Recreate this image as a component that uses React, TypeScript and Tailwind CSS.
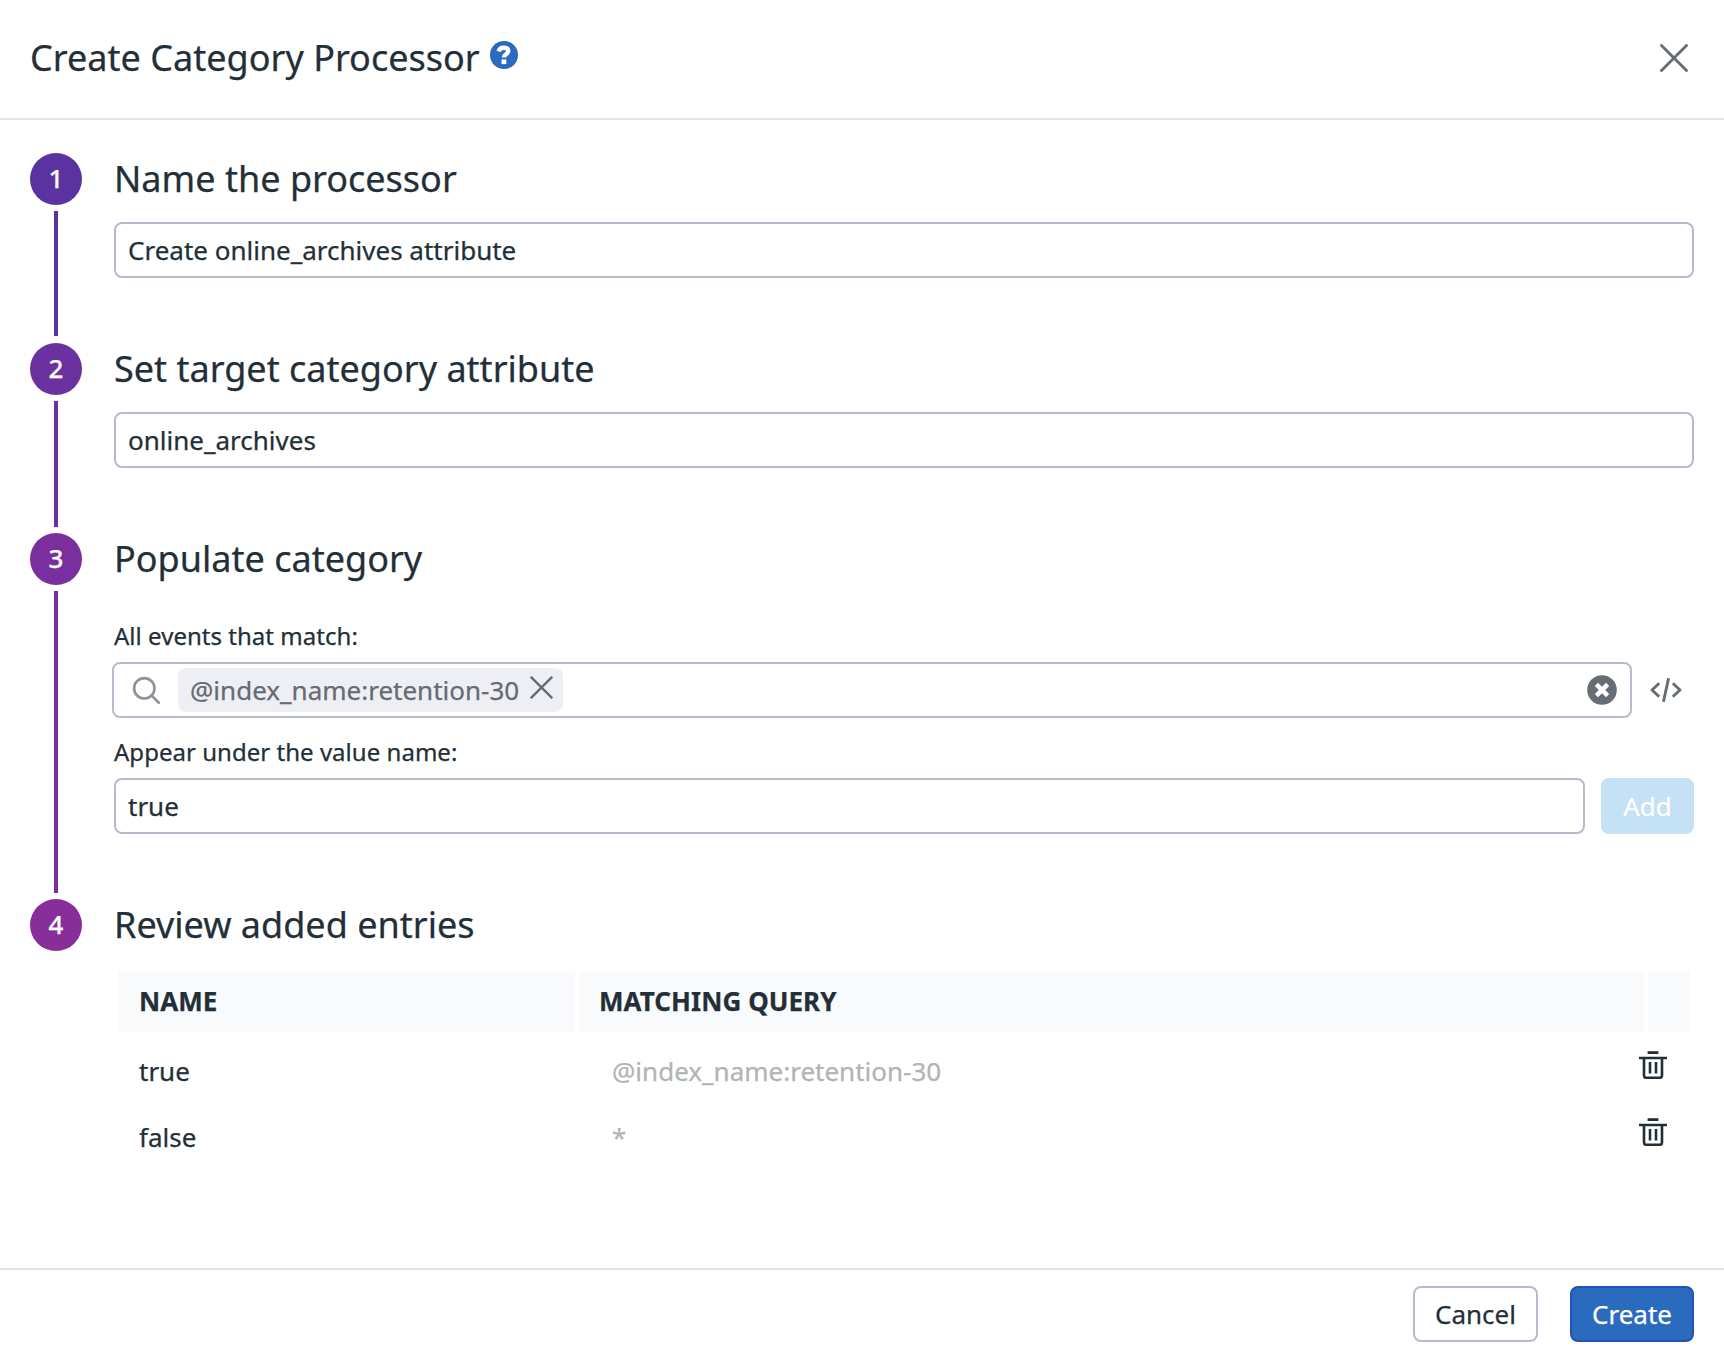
import type { ReactNode } from "react";

function StepBadge({ n, color }: { n: number; color: string }) {
  return (
    <div className={`flex size-[52px] shrink-0 items-center justify-center rounded-full text-[26px] font-medium leading-[51px] text-white ${color}`}>
      <span className="-mt-px">{n}</span>
    </div>
  );
}

type StepProps = { n: number; title: string; color: string; height: string; lineGap?: string; last?: boolean; children: ReactNode };

function Step({ n, title, color, height, lineGap = "mb-1.5", last, children }: StepProps) {
  return (
    <section className={`flex gap-8 ${height}`}>
      <div className="flex w-[52px] shrink-0 flex-col items-center">
        <StepBadge n={n} color={color} />
        {!last && <div className={`mt-1.5 w-1 flex-1 ${lineGap} ${color}`} />}
      </div>
      <div className="min-w-0 flex-1">
        <h2 className="h-[52px] text-[36px] leading-[51px] tracking-[0.01px]">{title}</h2>
        {children}
      </div>
    </section>
  );
}

function TextField({ value, className }: { value: string; className: string }) {
  return (
    <div className={`flex h-14 items-center rounded-lg border-2 border-[#b7bacc] bg-white px-3 text-[26px] leading-[36px] ${className}`}>
      {value}
    </div>
  );
}

function TrashIcon() {
  return (
    <svg className="h-7 w-7" viewBox="0 0 28 28" fill="none" stroke="#232f38">
      <path d="M8.6 1.6h10.8" strokeWidth="2.8" />
      <path d="M0 7h28M5 7v17.6q0 2.2 2.2 2.2h13.6q2.2 0 2.2-2.2V7" strokeWidth="2.6" />
      <path d="M11 11v11.4M17 11v11.4" strokeWidth="2.6" />
    </svg>
  );
}

const entries = [
  { name: "true", query: "@index_name:retention-30", iconGap: "mb-[13px]" },
  { name: "false", query: "*", iconGap: "mb-[11px]" },
];

export default function App() {
  return (
    <div className="flex h-[1364px] w-[1724px] flex-col bg-white font-['Noto_Sans',sans-serif] text-[#232f38] [-webkit-text-stroke:0.25px]">
      <header className="flex h-[120px] shrink-0 items-start justify-between border-b-2 border-[#e1e4eb] pl-[30px] pr-9">
        <div className="flex pt-[33px]">
          <h1 className="whitespace-nowrap text-[36px] leading-[50px] tracking-[0.02px]">Create Category Processor</h1>
          <svg className="ml-[10px] mt-2 size-7" viewBox="0 0 28 28">
            <circle cx="14" cy="14" r="14" fill="#2a6bbd" />
            <path d="M8.6 10.4C9.3 8 11 6.8 13.8 6.8c2.8 0 4.5 1.3 4.5 3.3 0 3.1-4.3 2.7-4.3 6.5" fill="none" stroke="#fff" strokeWidth="4.4" />
            <path d="M11.5 18.4h4.8v4.7h-4.8z" fill="#fff" />
          </svg>
        </div>
        <svg className="mt-11 size-7" viewBox="0 0 28 28" fill="none" stroke="#666d74" strokeWidth="2.9" strokeLinecap="round">
          <path d="M1.5 1.5l25 25M26.5 1.5l-25 25" />
        </svg>
      </header>

      <main className="flex-1 pl-[30px] pr-[30px] pt-[33px]">
        <Step n={1} title="Name the processor" color="bg-[#5b33a0]" height="h-[190px]" lineGap="mb-[7px]">
          <TextField value="Create online_archives attribute" className="mt-[17px]" />
        </Step>
        <Step n={2} title="Set target category attribute" color="bg-[#6b319f]" height="h-[190px]">
          <TextField value="online_archives" className="mt-[17px]" />
        </Step>
        <Step n={3} title="Populate category" color="bg-[#792f9d]" height="h-[366px]">
          <p className="mt-[35px] h-[42px] text-[24px] leading-[32px] tracking-[0.03px]">All events that match:</p>
          <div className="-ml-0.5 flex items-center">
            <div className="flex h-14 w-[1520px] items-center rounded-lg border-2 border-[#b7bacc] pl-[18px] pr-[13px]">
              <svg className="size-7" viewBox="0 0 28 28" fill="none" stroke="#8e9499" strokeWidth="2.7">
                <circle cx="12.3" cy="12.3" r="10.2" />
                <path d="M19.4 19.4l8.2 8.2" />
              </svg>
              <div className="ml-[18px] flex h-11 w-[385px] items-center justify-between rounded-lg bg-[#eeeff5] pl-3 pr-[10px] text-[26px] text-[#646c71]">
                <span>@index_name:retention-30</span>
                <svg className="mb-[5px] h-[23px] w-[23px]" viewBox="0 0 23 23" fill="none" stroke="#646c71" strokeWidth="2.4">
                  <path d="M.8.8l21.4 21.4M22.2.8L.8 22.2" />
                </svg>
              </div>
              <svg className="ml-auto size-[30px]" viewBox="0 0 30 30">
                <circle cx="15" cy="15" r="14.8" fill="#666d74" />
                <path d="M9.4 9.4l11.2 11.2M20.6 9.4L9.4 20.6" stroke="#fff" strokeWidth="4.5" />
              </svg>
            </div>
            <svg className="ml-[18px] h-6 w-8" viewBox="0 0 32 24" fill="none" stroke="#666d74" strokeWidth="2.9" strokeLinejoin="round">
              <path d="M9.2 5.2L2 12l7.2 6.8M22.8 5.2L30 12l-7.2 6.8M18.6.2l-5.2 23.6" />
            </svg>
          </div>
          <p className="mt-[18px] h-[42px] text-[24px] leading-[32px] tracking-[0.03px]">Appear under the value name:</p>
          <div className="flex gap-4">
            <TextField value="true" className="w-[1471px]" />
            <button className="h-14 flex-1 rounded-lg bg-[#c4e1f5] text-[26px] leading-none text-white">Add</button>
          </div>
        </Step>
        <Step n={4} title="Review added entries" color="bg-[#872e9b]" height="h-[250px]" last>
          <div className="ml-1 mt-[21px] grid w-[1572px] grid-cols-[457px_1065px_42px] gap-x-1 text-[26px]">
            <div className="flex h-[60px] items-center bg-[#f9fafc] pb-0.5 pl-[21px] font-bold">NAME</div>
            <div className="flex h-[60px] items-center bg-[#f9fafc] pb-0.5 pl-[20px] font-bold tracking-[0.06px]">MATCHING QUERY</div>
            <div className="h-[60px] bg-[#f9fafc]" />
          </div>
          <div className="ml-1 pt-[6px] text-[26px]">
            {entries.map((e) => (
              <div key={e.name} className="flex h-[66px] w-[1572px] items-center">
                <span className="w-[461px] pl-[21px]">{e.name}</span>
                <span className="flex-1 pl-[33px] text-[#b0b4b7]">{e.query}</span>
                <div className={`mr-[23px] ${e.iconGap}`}>
                  <TrashIcon />
                </div>
              </div>
            ))}
          </div>
        </Step>
      </main>

      <footer className="flex h-24 shrink-0 justify-end gap-8 border-t-2 border-[#e1e4eb] pr-[30px] pt-4 text-[26px] leading-none">
        <button className="h-14 w-[125px] rounded-lg border-2 border-[#b7bacc] bg-white">Cancel</button>
        <button className="h-14 w-[124px] rounded-lg border-2 border-[#2253bb] bg-[#2a6bbd] text-white">Create</button>
      </footer>
    </div>
  );
}
